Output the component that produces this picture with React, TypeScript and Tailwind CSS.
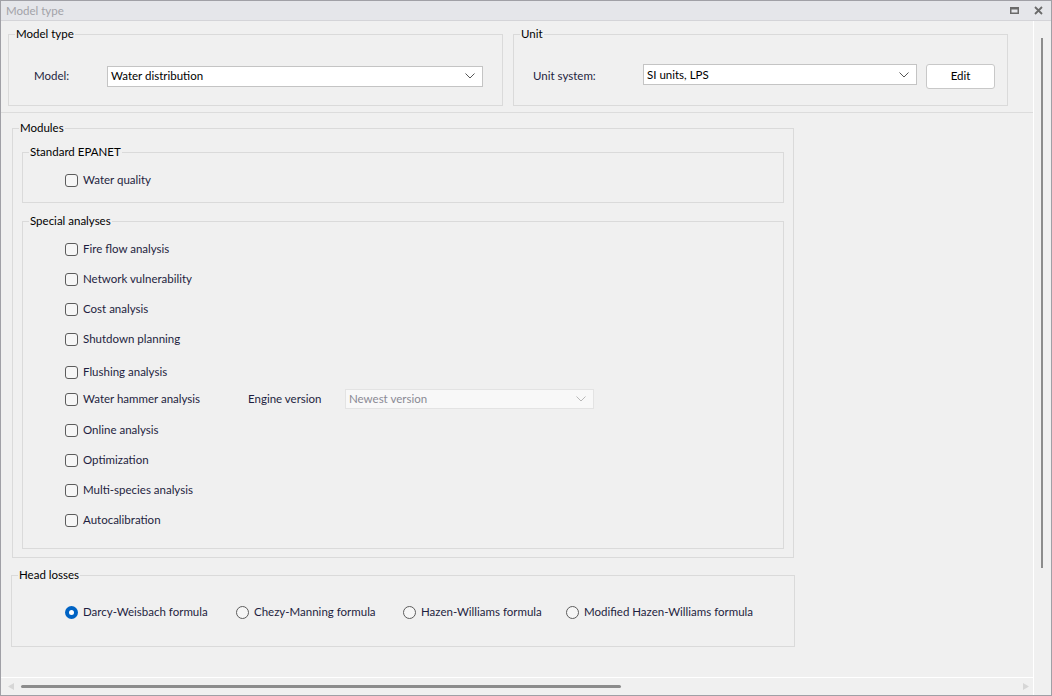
import type { ReactNode } from 'react';

const font = { fontFamily: 'Lato, Roboto, Arial, sans-serif' };

function Chevron({ color = '#555' }: { color?: string }) {
  return (
    <svg width="10" height="6" viewBox="0 0 10 6" className="shrink-0">
      <path d="M0.5 0.5 L5 5 L9.5 0.5" fill="none" stroke={color} strokeWidth="1" />
    </svg>
  );
}

// group box: the legend sits on the border line, padding goes on the inner div
function Group({
  title,
  className,
  bodyClass,
  children,
}: {
  title: string;
  className?: string;
  bodyClass?: string;
  children: ReactNode;
}) {
  return (
    <fieldset className={`border border-[#dadada] ${className ?? ''}`}>
      <legend className="ml-[6px] px-[1px] text-[11.5px] leading-[16px] text-black">{title}</legend>
      <div className={bodyClass}>{children}</div>
    </fieldset>
  );
}

function Select({ value, className, disabled }: { value: string; className: string; disabled?: boolean }) {
  return (
    <div
      className={`flex items-center justify-between pl-[3px] pr-[7px] ${
        disabled
          ? 'border border-[#e3e3e3] bg-[#f8f8f8] text-[#8a8a94]'
          : 'border border-[#c4c4c4] bg-white text-black'
      } ${className}`}
    >
      <span className="text-[11.5px] leading-none">{value}</span>
      <Chevron color={disabled ? '#b8b8b8' : '#555'} />
    </div>
  );
}

function Checkbox({ label, className }: { label: string; className?: string }) {
  return (
    <div className={`flex items-center gap-[5px] ${className ?? ''}`}>
      <span className="h-[13px] w-[13px] shrink-0 rounded-[3px] border border-[#5c5c5c] bg-[#f6f6f6]" />
      <span className="text-[11.5px] leading-none text-[#1e1e40]">{label}</span>
    </div>
  );
}

function Radio({ label, checked, className }: { label: string; checked?: boolean; className?: string }) {
  return (
    <div className={`flex items-center gap-[5px] ${className ?? ''}`}>
      {checked ? (
        <span className="flex h-[13px] w-[13px] shrink-0 items-center justify-center rounded-full bg-[#0063c4]">
          <span className="h-[5px] w-[5px] rounded-full bg-white" />
        </span>
      ) : (
        <span className="h-[13px] w-[13px] shrink-0 rounded-full border border-[#5c5c5c] bg-[#f6f6f6]" />
      )}
      <span className="text-[11.5px] leading-none text-[#1e1e40]">{label}</span>
    </div>
  );
}

const special: { label: string; mt: string }[] = [
  { label: 'Fire flow analysis', mt: 'mt-0' },
  { label: 'Network vulnerability', mt: 'mt-[10px]' },
  { label: 'Cost analysis', mt: 'mt-[10px]' },
  { label: 'Shutdown planning', mt: 'mt-[10px]' },
  { label: 'Flushing analysis', mt: 'mt-[13px]' },
];

const specialBottom: { label: string; mt: string }[] = [
  { label: 'Online analysis', mt: 'mt-[11px]' },
  { label: 'Optimization', mt: 'mt-[10px]' },
  { label: 'Multi-species analysis', mt: 'mt-[10px]' },
  { label: 'Autocalibration', mt: 'mt-[10px]' },
];

export default function App() {
  return (
    <div className="flex h-[696px] w-[1052px] flex-col overflow-hidden border border-[#a0a0a6] bg-[#f0f0f0]" style={font}>
      {/* title bar */}
      <div className="flex h-[20px] shrink-0 items-center justify-between border-b border-[#d4d4d8] bg-[#e5e6ea] pl-[5px] pr-[8px]">
        <span className="text-[11.5px] leading-none text-[#a2a2a8]">Model type</span>
        <div className="flex items-center gap-[15px]">
          <svg width="9" height="7" viewBox="0 0 9 7">
            <rect x="0.75" y="0.75" width="7.5" height="5.5" fill="none" stroke="#6a6a6a" strokeWidth="1.5" />
            <rect x="0" y="0" width="9" height="2.5" fill="#6a6a6a" />
          </svg>
          <svg width="9" height="9" viewBox="0 0 9 9">
            <path d="M1 1 L8 8 M8 1 L1 8" stroke="#6a6a6a" strokeWidth="1.8" />
          </svg>
        </div>
      </div>

      <div className="flex min-h-0 flex-1">
        <div className="flex min-w-0 flex-1 flex-col">
          <div className="flex min-h-0 flex-1 flex-col overflow-hidden">
            <div className="flex gap-[10px] pl-[7px] pt-[5px]">
              <Group title="Model type" className="w-[495px]" bodyClass="pb-[17px] pl-[25px] pt-[22px]">
                <div className="flex h-[24px] items-center">
                  <span className="w-[73px] text-[11.5px] leading-none text-[#1e1e40]">Model:</span>
                  <Select value="Water distribution" className="h-[21px] w-[376px]" />
                </div>
              </Group>
              <Group title="Unit" className="w-[495px]" bodyClass="pb-[17px] pl-[19px] pt-[22px]">
                <div className="flex h-[24px] items-center">
                  <span className="w-[110px] text-[11.5px] leading-none text-[#1e1e40]">Unit system:</span>
                  <Select value="SI units, LPS" className="-mt-[3px] h-[21px] w-[274px]" />
                  <button className="ml-[9px] h-[25px] w-[69px] rounded-[3px] border border-[#c8c8c8] bg-white text-[11.5px] leading-none text-black">
                    Edit
                  </button>
                </div>
              </Group>
            </div>

            <div className="mt-[6px] h-px w-full shrink-0 bg-[#dcdcdc]" />

            <Group title="Modules" className="ml-[11px] mt-[7px] w-[782px]" bodyClass="px-[9px] pb-[8px] pt-[8px]">
              <Group title="Standard EPANET" bodyClass="pb-[12px] pl-[42px] pt-[10px]">
                <div className="flex h-[20px] items-center">
                  <Checkbox label="Water quality" />
                </div>
              </Group>

              <Group title="Special analyses" className="mt-[10px]" bodyClass="pb-[18px] pl-[42px] pt-[10px]">
                {special.map((s) => (
                  <div key={s.label} className={`flex h-[20px] items-center ${s.mt}`}>
                    <Checkbox label={s.label} />
                  </div>
                ))}
                <div className="mt-[7px] flex h-[20px] items-center">
                  <Checkbox label="Water hammer analysis" className="w-[183px]" />
                  <span className="w-[97px] text-[11.5px] leading-none text-[#1e1e40]">Engine version</span>
                  <Select value="Newest version" disabled className="h-[20px] w-[249px]" />
                </div>
                {specialBottom.map((s) => (
                  <div key={s.label} className={`flex h-[20px] items-center ${s.mt}`}>
                    <Checkbox label={s.label} />
                  </div>
                ))}
              </Group>
            </Group>

            <Group title="Head losses" className="ml-[10px] mt-[9px] w-[784px]" bodyClass="pb-[24px] pl-[53px] pt-[19px]">
              <div className="flex h-[20px] items-center">
                <Radio label="Darcy-Weisbach formula" checked className="w-[171px]" />
                <Radio label="Chezy-Manning formula" className="w-[167px]" />
                <Radio label="Hazen-Williams formula" className="w-[163px]" />
                <Radio label="Modified Hazen-Williams formula" />
              </div>
            </Group>
          </div>

          {/* horizontal scrollbar */}
          <div className="flex h-[18px] shrink-0 items-center border-t border-white pl-[7px] pr-[4px]">
            <svg width="6" height="7" viewBox="0 0 6 7" className="shrink-0">
              <path d="M6 0 L0 3.5 L6 7 Z" fill="#d6d6d6" />
            </svg>
            <div className="ml-[7px] h-[3px] w-[600px] rounded-full bg-[#8c8c8c]" />
            <div className="flex-1" />
            <svg width="6" height="7" viewBox="0 0 6 7" className="shrink-0">
              <path d="M0 0 L6 3.5 L0 7 Z" fill="#d6d6d6" />
            </svg>
          </div>
        </div>

        {/* vertical scrollbar */}
        <div className="flex w-[18px] shrink-0 flex-col border-l border-white pl-[7px] pt-[17px]">
          <div className="h-[530px] w-[2px] bg-[#8c8c8c]" />
        </div>
      </div>
    </div>
  );
}
